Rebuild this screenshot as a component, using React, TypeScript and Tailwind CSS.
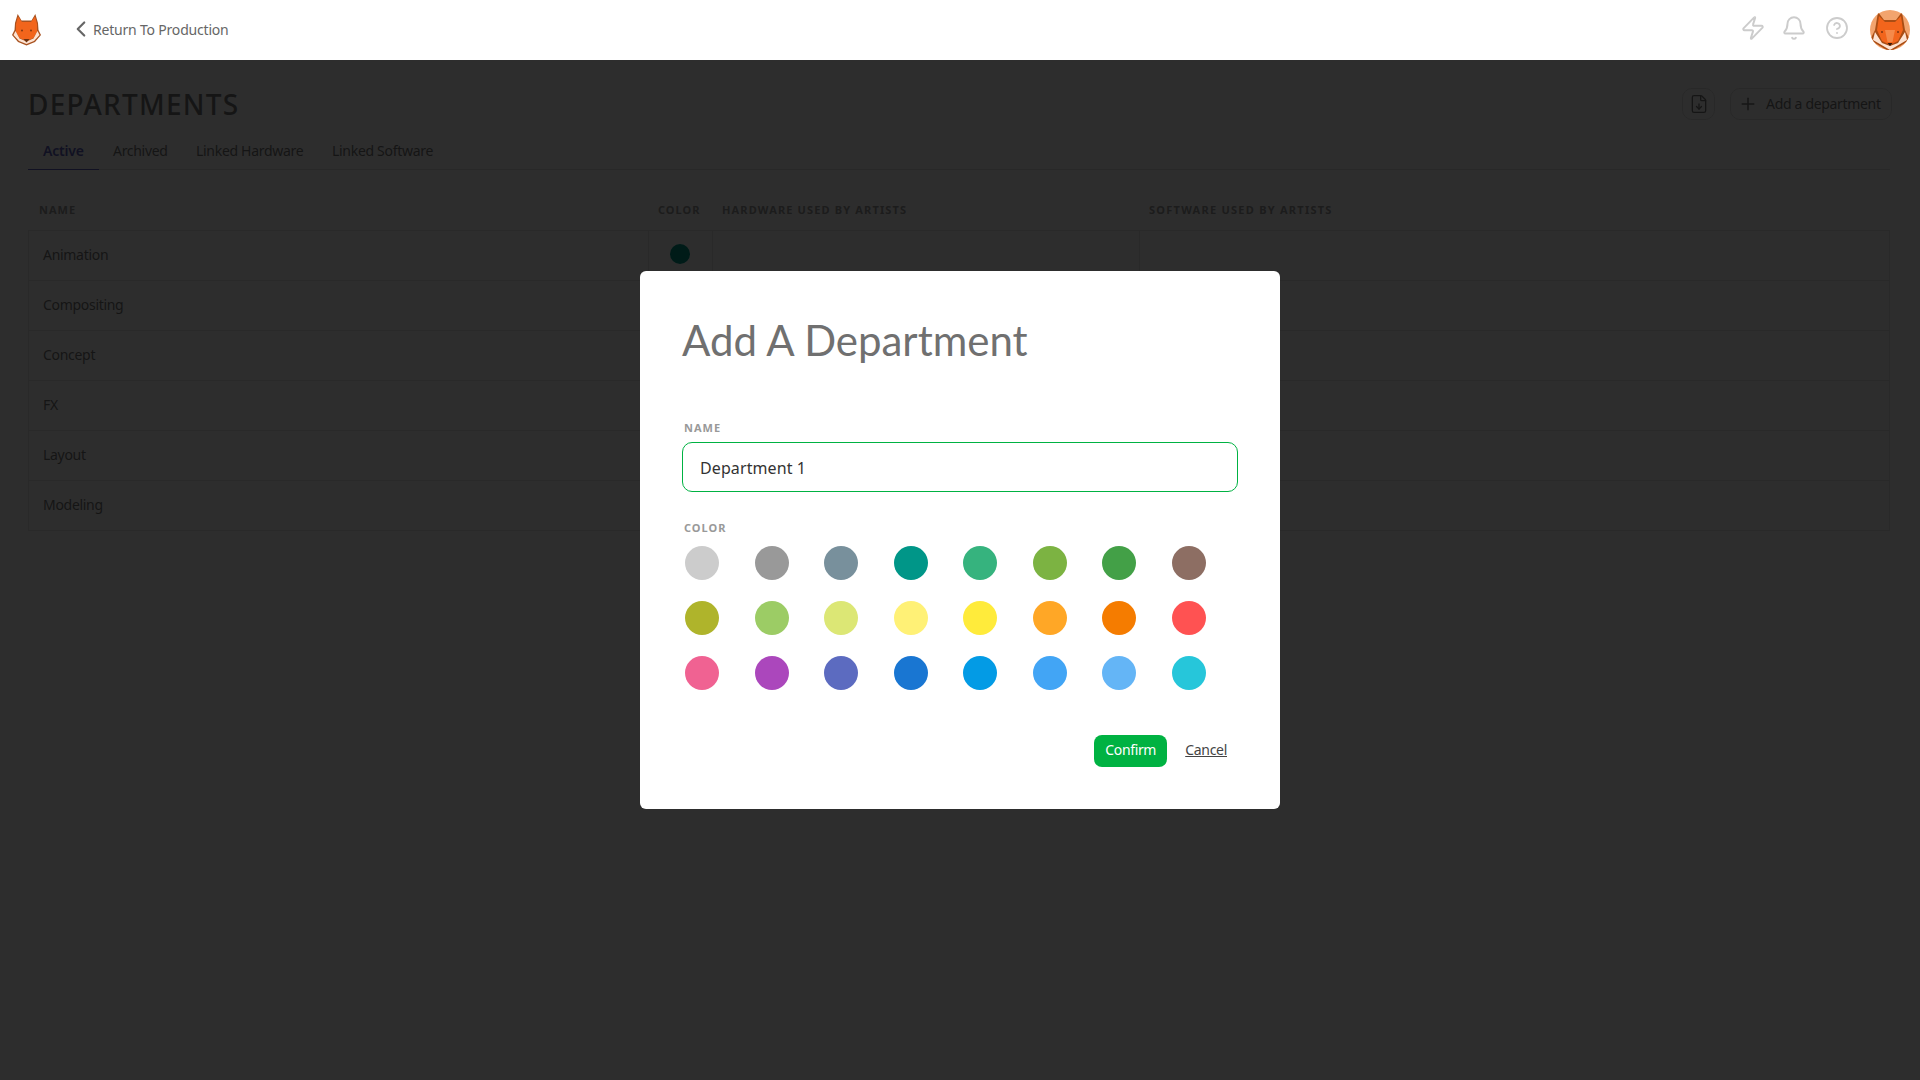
import React from "react";
import { ChevronLeft, Zap, Bell, CircleHelp, Plus, FileDown } from "lucide-react";

const colors = [
  "bg-[#cccccc]", "bg-[#999999]", "bg-[#78909c]", "bg-[#009688]", "bg-[#36b37e]", "bg-[#7cb342]", "bg-[#43a047]", "bg-[#8d6e63]",
  "bg-[#afb42b]", "bg-[#9ccc65]", "bg-[#dce775]", "bg-[#fff176]", "bg-[#ffeb3b]", "bg-[#ffa726]", "bg-[#f57c00]", "bg-[#ff5252]",
  "bg-[#f06292]", "bg-[#ab47bc]", "bg-[#5c6bc0]", "bg-[#1976d2]", "bg-[#039be5]", "bg-[#42a5f5]", "bg-[#64b5f6]", "bg-[#26c6da]",
];

const rows = ["Animation", "Compositing", "Concept", "FX", "Layout", "Modeling"];

function FoxLogo() {
  return (
    <svg viewBox="0 0 29 33" className="w-[29px] h-[33px] shrink-0">
      <path d="M5.7 1 L9.5 7.5 H19.5 L23.3 1 L26 10 L26.5 17 L29 22 L23 29 L14.5 32.5 L6 29 L0 22 L2.5 17 L3 10 Z" fill="#a85220" />
      <path d="M6 3.5 L10 9 H19 L23 3.5 L25 11 L25 19 L21.5 25 L14.5 28 L7.5 25 L4 19 L4 11 Z" fill="#f2651c" />
      <path d="M3.5 18 L7.5 25.5 L14.5 28.5 L21.5 25.5 L25.5 18 L27.5 22 L22 28 L14.5 31 L7 28 L1.5 22 Z" fill="#fde3d2" />
      <path d="M11.5 26 H17.5 L14.5 29.5 Z" fill="#6b3212" />
      <circle cx="10" cy="17.5" r="0.9" fill="#7a3410" />
      <circle cx="19" cy="17.5" r="0.9" fill="#7a3410" />
    </svg>
  );
}

function FoxAvatar() {
  return (
    <svg viewBox="0 0 40 40" className="w-10 h-10 shrink-0 rounded-full">
      <rect width="40" height="40" fill="#f2a46e" />
      <path d="M8 2 L14 10 H26 L32 2 L35 20 L40 30 L20 42 L0 30 L5 20 Z" fill="#a94d14" />
      <path d="M9 6 L15 12 H25 L31 6 L33 20 L28 31 L20 35 L12 31 L7 20 Z" fill="#f2651c" />
      <path d="M5 22 L12 33 L20 36 L28 33 L35 22 L37 30 L20 40 L3 30 Z" fill="#fde3d2" />
      <path d="M15 20 L25 20 L22.5 32 H17.5 Z" fill="#f58a4a" />
      <path d="M17.5 33 H22.5 L20 36 Z" fill="#3a1a08" />
      <circle cx="12" cy="22" r="1" fill="#7a3410" />
      <circle cx="28" cy="22" r="1" fill="#7a3410" />
    </svg>
  );
}

export default function App() {
  return (
    <div className="relative h-screen overflow-hidden bg-[#fafafa] font-['Noto_Sans',sans-serif] text-[#777777]">
      <header className="h-[60px] bg-white flex items-center pl-3 pr-[10px]">
        <div className="-mt-[2px]">
          <FoxLogo />
        </div>
        <div className="ml-[27px] -mt-[2px] flex items-center text-[14px] tracking-[-0.2px] text-[#666666]">
          <ChevronLeft size={26} strokeWidth={2} className="shrink-0" />
          <span className="-ml-[1px]">Return To Production</span>
        </div>
        <div className="ml-auto -mt-[5px] flex items-center text-[#cccccc]">
          <Zap size={26} strokeWidth={1.8} className="-ml-[1px]" />
          <Bell size={26} strokeWidth={1.8} className="ml-[15px]" />
          <CircleHelp size={24} strokeWidth={1.8} className="ml-[18px]" />
          <div className="ml-[21px] mt-[5px]">
            <FoxAvatar />
          </div>
        </div>
      </header>

      <main className="pl-[28px] pr-[30px]">
        <div className="flex items-center justify-between pt-[8px] h-[79px]">
          <h1 className="mt-[1px] text-[28px] leading-none font-medium tracking-[1.25px]">DEPARTMENTS</h1>
          <div className="flex items-center gap-[15px] -mr-[2px]">
            <div className="w-[33px] h-[32px] border border-[#dddddd] rounded-[10px] flex items-center justify-center">
              <FileDown size={20} strokeWidth={1.6} />
            </div>
            <div className="w-[162px] h-[32px] border border-[#dddddd] rounded-[10px] flex items-center pl-[7px] text-[14px] tracking-[-0.32px]">
              <Plus size={20} strokeWidth={1.8} className="mr-[8px]" />
              Add a department
            </div>
          </div>
        </div>

        <nav className="flex h-[31px] border-b border-[#dddddd] text-[14px] leading-[17px] tracking-[-0.3px]">
          <div className="w-[71px] h-[31px] pt-[3px] pl-[15px] border-b border-[#5e60ba] text-[#5e60ba] font-semibold tracking-[-0.2px]">Active</div>
          <div className="w-[97px] pt-[3px] pl-[14px]">Archived</div>
          <div className="w-[136px] pt-[3px]">Linked Hardware</div>
          <div className="pt-[3px]">Linked Software</div>
        </nav>

        <div className="flex h-[60px] pt-[33px] text-[11px] leading-[14px] font-bold tracking-[1px] text-[#999999] uppercase">
          <div className="w-[630px] pl-[11px] shrink-0">Name</div>
          <div className="w-[64px] shrink-0">Color</div>
          <div className="w-[427px] shrink-0 tracking-[1.15px]">Hardware used by artists</div>
          <div className="tracking-[1.25px]">Software used by artists</div>
        </div>

        <div className="border-t border-l border-r border-[#e0e0e0]">
          {rows.map((name, i) => (
            <div key={name} className="flex h-[50px] border-b border-[#e0e0e0] text-[14px] tracking-[-0.3px]">
              <div className="w-[620px] pl-[14px] pb-[2px] flex items-center shrink-0 border-r border-[#e0e0e0]">{name}</div>
              <div className="w-[64px] shrink-0 border-r border-[#e0e0e0] flex items-center justify-center">
                {i === 0 && <span className="w-5 h-5 rounded-full bg-[#009688] -mt-[4px] -ml-[2px]" />}
              </div>
              <div className="w-[427px] shrink-0 border-r border-[#e0e0e0]" />
              <div className="flex-1" />
            </div>
          ))}
        </div>
      </main>

      <div className="absolute left-0 right-0 top-[60px] bottom-0 bg-[rgba(0,0,0,0.82)] flex justify-center items-start pt-[211px]">
        <div className="w-[640px] h-[538px] bg-white rounded-[6px] pl-[42px] pr-[42px]">
          <h2 className="mt-[42px] text-[42px] leading-[54px] font-normal font-['Lato',sans-serif] text-[#707070]">Add A Department</h2>

          <label className="block mt-[54px] pl-[2px] text-[11px] leading-[14px] font-bold tracking-[1px] text-[#999999]">NAME</label>
          <div className="mt-[7px] w-[556px] h-[50px] border border-[#00b242] rounded-[10px] flex items-center pl-[17px] pt-[1px] text-[16px] tracking-[0.1px] text-[#333333]">
            Department 1
          </div>

          <label className="block mt-[29px] pl-[2px] text-[11px] leading-[14px] font-bold tracking-[1px] text-[#999999]">COLOR</label>
          <div className="mt-[11px] ml-[3px] w-[521px] grid gap-y-[21px] justify-between [grid-template-columns:repeat(8,34px)]">
            {colors.map((c) => (
              <span key={c} className={`w-[34px] h-[34px] rounded-full ${c}`} />
            ))}
          </div>

          <div className="mt-[45px] flex items-center justify-end pr-[11px]">
            <div className="w-[73px] h-[32px] pb-[3px] rounded-[8px] bg-[#00b242] text-white text-[14px] tracking-[-0.35px] flex items-center justify-center">Confirm</div>
            <div className="ml-[18px] -mt-[4px] text-[14px] tracking-[-0.3px] underline text-[#444444]">Cancel</div>
          </div>
        </div>
      </div>
    </div>
  );
}
